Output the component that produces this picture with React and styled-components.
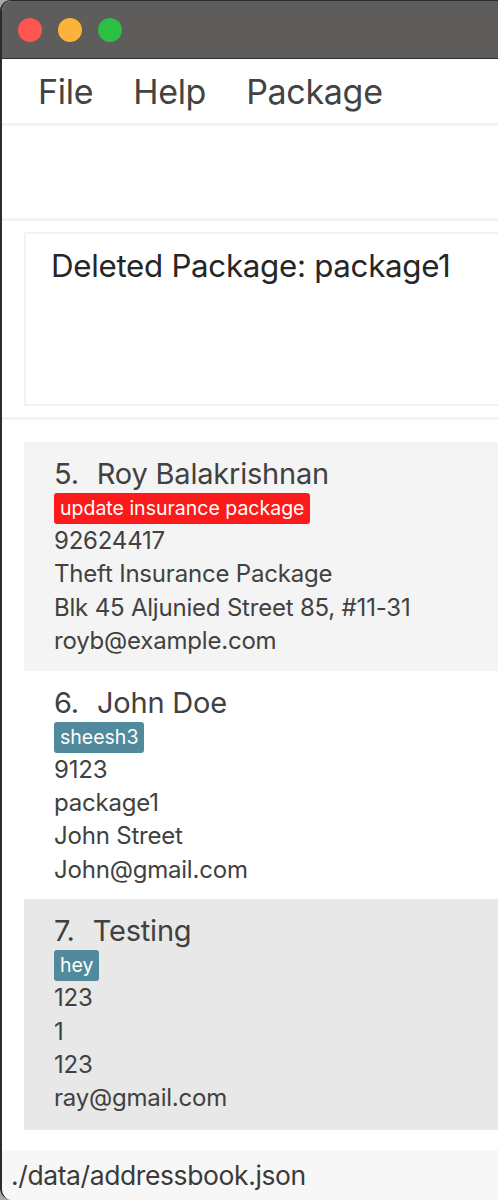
import React from "react";
import styled, { createGlobalStyle } from "styled-components";

const Global = createGlobalStyle`
  html, body { margin: 0; padding: 0; }
  body {
    background: #a9a9a9;
    overflow: hidden;
    font-family: Inter, "Noto Sans", sans-serif;
  }
`;

const Window = styled.div`
  width: 540px;
  height: 1200px;
  box-sizing: border-box;
  border-left: 2px solid #2c2c2c;
  border-top: 1px solid #2c2c2c;
  border-radius: 11px 11px 0 12px;
  overflow: hidden;
  background: #ffffff;
  display: flex;
  flex-direction: column;
`;

const TitleBar = styled.div`
  height: 57px;
  flex: none;
  background: #5e5d5b;
  border-bottom: 1px solid #2f2f2f;
  display: flex;
  align-items: center;
  gap: 16px;
  padding-left: 16px;
`;

const Light = styled.span`
  width: 24px;
  height: 24px;
  border-radius: 50%;
  background: ${(p) => p.$color};
`;

const MenuBar = styled.div`
  height: 64px;
  flex: none;
  display: flex;
  align-items: center;
  gap: 40px;
  padding-left: 36px;
  font-size: 34px;
  color: #434343;
`;

const MenuItem = styled.span`
  letter-spacing: -0.3px;
`;

const Separator = styled.div`
  height: 3px;
  flex: none;
  background: #f3f3f3;
`;

const CommandBox = styled.div`
  height: 92px;
  flex: none;
`;

const ResultSection = styled.div`
  flex: none;
  padding: 11px 0 11px 22px;
`;

const ResultBox = styled.div`
  height: 174px;
  box-sizing: border-box;
  border: 2px solid #f2f2f2;
  padding: 13px 0 0 25px;
  font-size: 31.3px;
  color: #262626;
  letter-spacing: -0.3px;
`;

const List = styled.div`
  flex: 1;
  padding: 22px 0 0 22px;
  display: flex;
  flex-direction: column;
`;

const Card = styled.div`
  background: ${(p) => p.$bg};
  padding: 12px 0 ${(p) => (p.$last ? 15 : 13)}px 30px;
  color: #414141;
`;

const Name = styled.div`
  font-size: 29px;
  line-height: 39px;
  display: flex;
  gap: 18px;
  letter-spacing: -0.2px;
`;

const Tag = styled.span`
  display: inline-block;
  align-self: flex-start;
  background: ${(p) => p.$bg};
  color: #ffffff;
  font-size: 19.5px;
  line-height: 31px;
  height: 31px;
  padding: 0 6px;
  border-radius: 3px;
`;

const Field = styled.div`
  font-size: 24px;
  line-height: 33.4px;
  letter-spacing: -0.2px;
`;

const CardBody = styled.div`
  display: flex;
  flex-direction: column;
`;

const StatusBar = styled.div`
  height: 50px;
  flex: none;
  background: #f7f7f7;
  display: flex;
  align-items: center;
  padding-left: 9px;
  font-size: 26.5px;
  color: #3a3a3a;
  letter-spacing: -0.4px;
`;

const people = [
  {
    idx: 5,
    name: "Roy Balakrishnan",
    tag: "update insurance package",
    tagBg: "#fe1a1a",
    bg: "#f4f4f4",
    fields: ["92624417", "Theft Insurance Package", "Blk 45 Aljunied Street 85, #11-31", "royb@example.com"],
  },
  {
    idx: 6,
    name: "John Doe",
    tag: "sheesh3",
    tagBg: "#518a9c",
    bg: "#ffffff",
    fields: ["9123", "package1", "John Street", "John@gmail.com"],
  },
  {
    idx: 7,
    name: "Testing",
    tag: "hey",
    tagBg: "#518a9c",
    bg: "#e8e8e8",
    fields: ["123", "1", "123", "ray@gmail.com"],
  },
];

export default function App() {
  return (
    <>
      <Global />
      <Window>
        <TitleBar>
          <Light $color="#fe5552" />
          <Light $color="#fdb23a" />
          <Light $color="#2bc043" />
        </TitleBar>
        <MenuBar>
          <MenuItem>File</MenuItem>
          <MenuItem>Help</MenuItem>
          <MenuItem>Package</MenuItem>
        </MenuBar>
        <Separator />
        <CommandBox />
        <Separator />
        <ResultSection>
          <ResultBox>Deleted Package: package1</ResultBox>
        </ResultSection>
        <Separator />
        <List>
          {people.map((p, i) => (
            <Card key={p.idx} $bg={p.bg} $last={i === people.length - 1}>
              <CardBody>
                <Name>
                  <span>{p.idx}.</span>
                  <span>{p.name}</span>
                </Name>
                <Tag $bg={p.tagBg}>{p.tag}</Tag>
                {p.fields.map((f, j) => (
                  <Field key={j}>{f}</Field>
                ))}
              </CardBody>
            </Card>
          ))}
        </List>
        <StatusBar>./data/addressbook.json</StatusBar>
      </Window>
    </>
  );
}
